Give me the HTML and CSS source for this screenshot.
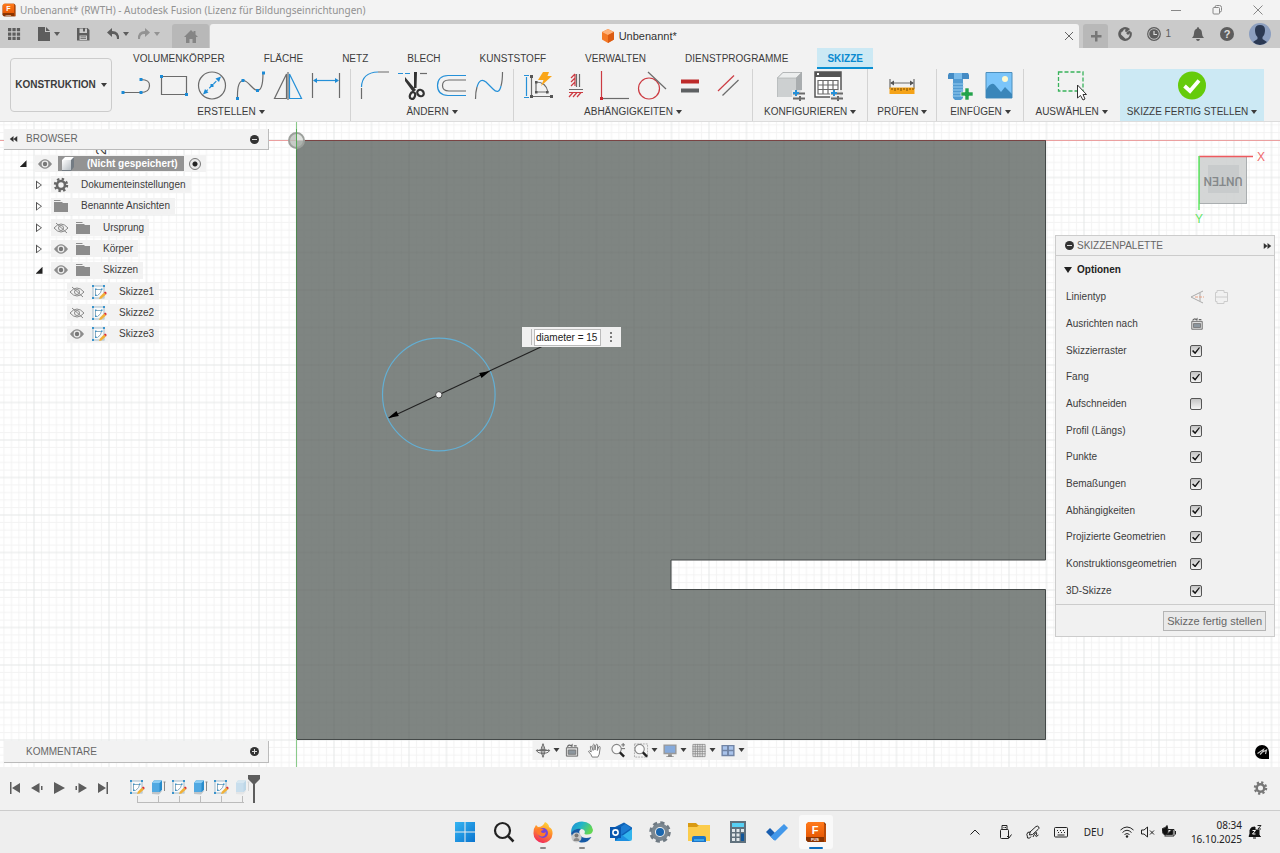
FILE: index.html
```html
<!DOCTYPE html>
<html lang="de">
<head>
<meta charset="utf-8">
<title>Unbenannt* (RWTH) - Autodesk Fusion</title>
<link rel="stylesheet" href="styles.css">
</head>
<body>
<svg class="defs" aria-hidden="true">
  <defs>
    <linearGradient id="orange" x1="0" y1="0" x2="0" y2="1"><stop offset="0" stop-color="#ff7a1c"/><stop offset="1" stop-color="#e85a05"/></linearGradient>
    <linearGradient id="blueTile" x1="0" y1="0" x2="1" y2="1"><stop offset="0" stop-color="#35b5f2"/><stop offset="1" stop-color="#0a74cf"/></linearGradient>
    <linearGradient id="fox" x1="0.7" y1="0" x2="0.3" y2="1"><stop offset="0" stop-color="#ffd93b"/><stop offset=".45" stop-color="#ff8a2a"/><stop offset="1" stop-color="#f0265f"/></linearGradient>
    <linearGradient id="edge" x1="0" y1="0" x2="1" y2="0.4"><stop offset="0" stop-color="#1e88d8"/><stop offset=".5" stop-color="#22b5c8"/><stop offset="1" stop-color="#62d654"/></linearGradient>
    <linearGradient id="metal" x1="0" y1="0" x2="1" y2="1"><stop offset="0" stop-color="#fff"/><stop offset="1" stop-color="#b5bcc2"/></linearGradient>
  </defs>
  <symbol id="fusion" viewBox="0 0 22 22">
    <path d="M4 1H19L21 3V21H3L1 19V4Z" fill="#7c3000"/><path d="M3 1H19V16H1V3Z" fill="url(#orange)"/><path d="M1 16H19V21H3L1 19Z" fill="#8b3400"/>
    <path d="M19 2L21 4V21H19Z" fill="#b94a08"/>
    <text x="10" y="13" class="fusion-f">F</text><text x="10" y="20" class="fusion-s">FUS</text>
  </symbol>
  <symbol id="eye" viewBox="0 0 16 16"><path d="M1 8Q8 -1.500 15 8Q8 17.500 1 8Z" fill="#8c8c8c"/><circle cx="8" cy="8" r="3.400" fill="#eee"/><circle cx="8" cy="8" r="2.200" fill="#777"/></symbol>
  <symbol id="eyeoff" viewBox="0 0 16 16"><g fill="none" stroke="#888"><path d="M1 8Q8 0 15 8Q8 16 1 8Z"/><circle cx="8" cy="8" r="2.500"/><path d="M3 3L14 13"/></g></symbol>
  <symbol id="folder" viewBox="0 0 16 16"><path d="M1 2H7L8 3H1ZM1 4H9L10 5H15V14H1Z" fill="#8c8c8c"/></symbol>
  <symbol id="gear" viewBox="0 0 16 16"><circle cx="8" cy="8" r="4" fill="none" stroke="currentColor" stroke-width="2.600"/><circle cx="8" cy="8" r="6" fill="none" stroke="currentColor" stroke-width="2.400" stroke-dasharray="2.350 2.362"/></symbol>
  <symbol id="sketch" viewBox="0 0 16 16"><rect x="2" y="2" width="11" height="12" fill="#fafafa" stroke="#a3bccb"/><path d="M4.500 5.500H10.500Q10.500 9 6.500 11.500H4.500Z" fill="#fff" stroke="#8aaabd"/><path d="M1 1h2v2H1zM12 1h2v2h-2zM1 13h2v2H1zM4 4.500h1.500V6H4zM10 4.500h1.500V6H10zM4 10.500h1.500V12H4z" fill="#3a94cc"/><path d="M8 15L9 12.500L13 8.500L15 10.500L10.500 14.500Z" fill="#f0b038"/><path d="M13 8.500L14 7.500Q16 8 15.500 9.800L15 10.500Z" fill="#de3030"/></symbol>
  <symbol id="body" viewBox="0 0 16 16"><path d="M2 12V15L9 15.500L12 12Z" fill="#bfc5c9"/><path d="M2 4L4 1.500H12V11L9.500 13H2Z" fill="#288ccb"/><path d="M2 4H9.500V13H2Z" fill="#50a9e2"/><path d="M4 1.500H12L9.500 4H2Z" fill="#8bcdf4"/><path d="M14.500 3V12M13.500 3H15.500" stroke="#888" fill="none"/></symbol>
  <symbol id="camera" viewBox="0 0 16 16"><path d="M2 5H14V14H2Z" fill="#ddd" stroke="#686868"/><path d="M4 7.500H12V12H4Z" fill="#8c969e" stroke="#777"/><path d="M3 4Q5 1 7 3L8 2V4M10 3H13" fill="none" stroke="#666" stroke-width="1.300"/></symbol>
  <symbol id="magnify" viewBox="0 0 16 16"><circle cx="6.500" cy="6.500" r="5" fill="#fafafa" stroke="#888" stroke-width="1.200"/><path d="M10 10L14.500 14.500" stroke="#222" stroke-width="2.500"/></symbol>
</svg>

<header class="titlebar">
  <svg class="title-logo" viewBox="0 0 22 22"><use href="#fusion"/></svg>
  <span class="title-text">Unbenannt* (RWTH) - Autodesk Fusion (Lizenz für Bildungseinrichtungen)</span>
  <div class="window-buttons">
    <button aria-label="Minimieren"><svg viewBox="0 0 10 10"><path d="M0 5.500H10"/></svg></button>
    <button aria-label="Verkleinern"><svg viewBox="0 0 10 10"><path d="M1 3.500Q1 2.500 2 2.500H6.500Q7.500 2.500 7.500 3.500V8Q7.500 9 6.500 9H2Q1 9 1 8ZM3 2Q3 .5 4.500 .5H7.500Q9.500 .5 9.500 2.500V5.500Q9.500 7 8 7"/></svg></button>
    <button aria-label="Schließen"><svg viewBox="0 0 10 10"><path d="M.5 .5L9.500 9.500M9.500 .5L.5 9.500"/></svg></button>
  </div>
</header>

<div class="appbar">
  <div class="quick">
    <button aria-label="Datenbereich"><svg viewBox="0 0 14 14"><path d="M1 1h3.300v3.300H1zM5.400 1h3.300v3.300H5.400zM9.800 1h3.300v3.300H9.800zM1 5.400h3.300v3.300H1zM5.400 5.400h3.300v3.300H5.400zM9.800 5.400h3.300v3.300H9.800zM1 9.800h3.300v3.300H1zM5.400 9.800h3.300v3.300H5.400zM9.800 9.800h3.300v3.300H9.800z"/></svg></button>
    <button class="quick-file" aria-label="Datei"><svg viewBox="0 0 14 14"><path d="M1 0H8V5H13V14H1ZM9 0L13 4H9Z"/></svg><i class="caret"></i></button>
    <button class="quick-save" aria-label="Speichern"><svg viewBox="0 0 14 14"><path fill-rule="evenodd" d="M1 1H11.500L13.500 3V13.500H1ZM3.500 1.500V6H11V1.500H9V4.500H7V1.500ZM3.500 8.500V13H11V8.500ZM4.500 9.500H10V10.300H4.500ZM4.500 11.300H10V12H4.500Z"/></svg></button>
    <button aria-label="Rückgängig"><svg viewBox="0 0 14 14"><path d="M6 1L1 5.500L6 10V7Q11 6.500 11 12H13Q13.500 4 6 4Z"/></svg><i class="caret"></i></button>
    <button class="faded" aria-label="Wiederholen"><svg viewBox="0 0 14 14"><path d="M8 1L13 5.500L8 10V7Q3 6.500 3 12H1Q.5 4 8 4Z"/></svg><i class="caret"></i></button>
  </div>
  <button class="home-tab" aria-label="Startseite"><svg viewBox="0 0 14 14"><path d="M7 0L9.500 2.500V1H11.500V4.500L14 7H12V13H8.500V9H5.500V13H2V7H0Z"/></svg></button>
  <div class="doc-tab">
    <span class="doc-name"><svg viewBox="0 0 14 14"><path d="M7 0L13 3V10.500L7 14L1 10.500V3Z" fill="#f47a27"/><path d="M7 0L13 3L7 6L1 3Z" fill="#ffb27a"/><path d="M13 3V10.500L7 14V6Z" fill="#db5b12"/></svg>Unbenannt*</span>
    <button class="doc-close" aria-label="Tab schließen"><svg viewBox="0 0 10 10"><path d="M1 1L9 9M9 1L1 9"/></svg></button>
  </div>
  <button class="plus-tab" aria-label="Neuer Tab"><svg viewBox="0 0 12 12"><path d="M5 1H7.500V5H11.500V7.500H7.500V11.500H5V7.500H1V5H5Z"/></svg></button>
  <div class="status">
    <button aria-label="Erweiterungen"><svg viewBox="0 0 14 14"><path d="M4 1A6.800 6.800 0 1 0 13.500 5L11.500 5.500Q12.500 11 7.500 11.800L3 7.500Q2.500 4 4 1Z"/><path d="M3 7Q3 4.500 5 4.300Q5 2.500 7.500 2L7 4.500L9 5L12 2Q9.500 0 7 0Q5 0 3 2Z"/><path d="M8 6L10 8L13 5L11.500 3.500Z"/></svg></button>
    <button class="jobs" aria-label="Auftragsstatus"><svg viewBox="0 0 14 14"><circle cx="7" cy="7" r="6.300" fill="none" stroke="currentColor" stroke-width="1.200"/><circle cx="7" cy="7" r="4.800"/><path d="M7 4V7.500H10" fill="none" stroke="#ddd" stroke-width="1.200"/></svg>1</button>
    <button aria-label="Benachrichtigungen"><svg viewBox="0 0 14 14"><path d="M7 0Q8 0 8 1.500Q11 2.500 11 6.500Q11 9 13 11H1Q3 9 3 6.500Q3 2.500 6 1.500Q6 0 7 0ZM5 12H9Q8.500 14 7 14Q5.500 14 5 12Z"/></svg></button>
    <button aria-label="Hilfe"><svg viewBox="0 0 14 14"><circle cx="7" cy="7" r="7"/><text x="7" y="11" class="help-mark">?</text></svg></button>
    <button class="avatar" aria-label="Profil"><svg viewBox="0 0 22 22"><circle cx="11" cy="11" r="11" fill="#8c9fc0"/><path d="M6 7Q6 2 11 2Q16 2 16 7Q16 12 13.500 14V16L18 19Q15 22 11 22Q7 22 4 19L8.500 16V14Q6 12 6 7Z" fill="#2b3953"/></svg></button>
  </div>
</div>

<section class="ribbon">
  <button class="workspace-switch">KONSTRUKTION<i class="caret"></i></button>
  <div class="ribbon-main">
    <nav class="tabs">
      <a href="#">VOLUMENKÖRPER</a><a href="#">FLÄCHE</a><a href="#">NETZ</a><a href="#">BLECH</a><a href="#">KUNSTSTOFF</a><a href="#">VERWALTEN</a><a href="#">DIENSTPROGRAMME</a><a href="#" class="active">SKIZZE</a>
    </nav>
    <div class="groups">
      <div class="group">
        <div class="tools">
          <button aria-label="Linie"><svg viewBox="0 0 30 30"><g class="ln"><path d="M2 21.500H20M20 8.500Q29 8.500 28.500 15Q28 21.500 20 21.500"/></g><path class="dot" d="M.5 20h3v3h-3zM18.500 20h3v3h-3zM18.500 7h3v3h-3z"/></svg></button>
          <button aria-label="Rechteck"><svg viewBox="0 0 30 30"><path class="ln" d="M2.500 5.500H27.500V23.500H2.500Z"/><path class="dot" d="M1 4h3v3H1zM26 22h3v3h-3z"/></svg></button>
          <button aria-label="Kreis"><svg viewBox="0 0 30 30"><circle class="ln" cx="15" cy="14.500" r="13.500"/><path class="bl" d="M8 21.500L22 7.500" stroke-dasharray="4 2"/><path class="dot" d="M13.500 13h3v3h-3zM24 5.500L22 11L18.500 7.500ZM6 23.500L8 18L11.500 21.500Z"/></svg></button>
          <button aria-label="Spline"><svg viewBox="0 0 30 30"><path class="ln" d="M2.500 27Q2 9 9 9.500C13 10 18 19 22 19.500Q28 20 28 2"/><path class="dot" d="M1 26h3v3H1zM6.500 8h3v3h-3zM21 18h3v3h-3zM27 .5h3v3h-3z"/></svg></button>
          <button aria-label="Spiegeln"><svg viewBox="0 0 30 30"><path class="ln" d="M13.500 3V27.500H1.500Z"/><path class="ln" d="M15 1V29"/><path class="bl" d="M16.500 3V27.500H28.500Z"/></svg></button>
          <button aria-label="Bemaßung"><svg viewBox="0 0 30 30"><path class="ln" d="M1.500 2V27M28.500 2V27"/><path class="bl" d="M3 9.500H27"/><path class="dot" d="M2 9.500L6 7V12ZM28 9.500L24 7V12Z"/></svg></button>
        </div>
        <button class="group-label">ERSTELLEN<i class="caret"></i></button>
      </div>
      <div class="group">
        <div class="tools">
          <button aria-label="Abrundung"><svg viewBox="0 0 30 30"><path class="ln" d="M1.500 28V17M18 1H29"/><path class="bl" d="M1.500 16Q2 1.500 18 1"/></svg></button>
          <button aria-label="Stutzen"><svg viewBox="0 0 30 30"><path class="bl" d="M0 2.500H14" stroke-dasharray="5 2"/><path class="ln" d="M22 2.500H29"/><path d="M7 6L18 19L15 21L7 10ZM16 1H19L18.500 17H16Z" fill="#333"/><g fill="none" stroke="#333" stroke-width="2.200"><ellipse cx="14.500" cy="24.500" rx="2.500" ry="3.500" transform="rotate(20 14.500 24.500)"/><ellipse cx="22.500" cy="22" rx="3" ry="3.500" transform="rotate(-45 22.500 22)"/></g></svg></button>
          <button aria-label="Versatz"><svg viewBox="0 0 30 30"><path class="bl" d="M30 4.500H12Q1.500 5 1.500 14.500Q1.500 24 12 24.500H30"/><path class="ln" d="M30 9H13Q6.500 9 6.500 14.500Q6.500 20 13 20H30"/></svg></button>
          <button aria-label="Krümmung"><svg viewBox="0 0 30 30"><path class="ln" d="M1.500 28Q1.500 21 3 16M28.500 1Q28.500 10 27 15"/><path class="bl" d="M3 16Q6 6 12 11L19 18Q25 24 27 15"/></svg></button>
        </div>
        <button class="group-label">ÄNDERN<i class="caret"></i></button>
      </div>
      <div class="group">
        <div class="tools">
          <button aria-label="Automatisch bemaßen"><svg viewBox="0 0 30 30"><path class="bl" d="M3.500 6V25M1 4.500H6M1 26.500H6"/><path class="ln" d="M8.500 5V25.500H29M13 11V21H25Q23 11 13 11"/><path d="M7 4h3v3H7zM7 24h3v3H7zM27 24h3v3h-3zM12 10h2.500v2.500H12zM12 20h2.500v2.500H12zM23 20h2.500v2.500H23z" fill="#555"/><path d="M20 1H26L24.500 5H29L18 15L20.500 9H15Z" fill="#faa61a"/></svg></button>
          <button aria-label="Horizontal/Vertikal"><svg viewBox="0 0 30 30"><path class="ln" d="M15.500 3V16M18.500 3V16M8 18.500H22"/><path class="rd" d="M14 3L10 7M14 7L10 11M14 11L10 15M14 3V15M8 21.500H22M12 21.500L8 26M16 21.500L12 26M20 21.500L16 26"/></svg></button>
          <button aria-label="Koinzident"><svg viewBox="0 0 30 30"><path class="ln" d="M2 27.500H30"/><path class="rd" d="M2.500 0V27"/><path d="M1 26h3v3H1z" fill="#c82a32"/></svg></button>
          <button aria-label="Tangential"><svg viewBox="0 0 30 30"><circle class="rd" cx="12" cy="17.500" r="10.500"/><path class="ln" d="M11 1L29 18"/></svg></button>
          <button aria-label="Gleich"><svg viewBox="0 0 30 30"><path d="M6 8.500H24V12.500H6Z" fill="#bd2a2a"/><path d="M6 17.500H24V21.500H6Z" fill="#5e6163"/></svg></button>
          <button aria-label="Parallel"><svg viewBox="0 0 30 30"><path class="rd" d="M5 20L21 4.500"/><path class="ln" d="M9.500 24.500L25.500 9"/></svg></button>
        </div>
        <button class="group-label">ABHÄNGIGKEITEN<i class="caret"></i></button>
      </div>
      <div class="group wide">
        <div class="tools">
          <button aria-label="Konfiguration"><svg viewBox="0 0 30 30"><path d="M1 7L7 1H26V19L20 26H1Z" fill="#a9adaf"/><path d="M1.500 7H20V26H1.500Z" fill="#cdd0d1"/><path d="M1.500 7L7 1.500H25.500L20 7Z" fill="#eceeee" stroke="#a5a8aa" stroke-width=".6"/><path d="M16 19H30V30H16Z" fill="#f2f2f2" fill-opacity=".7"/><path class="ln heavy" d="M17 22.500H29M17 27.500H29M24 25V30"/><path class="bl heavy" d="M20 19V25M17 22H23"/></svg></button>
          <button aria-label="Tabelle"><svg viewBox="0 0 30 30"><path d="M1 1H27V26H1Z" fill="#fff" stroke="#555" stroke-width="1.500"/><path d="M1 1H27V6H1Z" fill="#555"/><path d="M3 2h2v2H3z" fill="#fff"/><path class="ln" d="M4 9.500H24V23H4ZM4 14H24M4 18.500H24M9 9.500V23M14 9.500V23M19 9.500V23"/><path d="M16 19H30V30H16Z" fill="#f2f2f2" fill-opacity=".9"/><path class="ln heavy" d="M17 22.500H29M17 27.500H29M24 25V30"/><path class="bl heavy" d="M20 19V25M17 22H23"/></svg></button>
        </div>
        <button class="group-label">KONFIGURIEREN<i class="caret"></i></button>
      </div>
      <div class="group">
        <div class="tools"><button aria-label="Messen"><svg viewBox="0 0 30 30"><path class="ln" d="M3 8V18M27 8V18M4 12H26"/><path d="M3 12L7 9.500V14.500ZM27 12L23 9.500V14.500Z" fill="#555"/><path d="M2.500 16.500H27.500V23H2.500Z" fill="#f5a318"/><path d="M5 17v2M8 17v3M11 17v2M14 17v3M17 17v2M20 17v3M23 17v2M26 17v2" stroke="#774c05"/></svg></button></div>
        <button class="group-label">PRÜFEN<i class="caret"></i></button>
      </div>
      <div class="group">
        <div class="tools">
          <button aria-label="Befestigung einfügen"><svg viewBox="0 0 30 30"><path d="M3 2H22L23 4V8H2V4Z" fill="#448bc4"/><path d="M8 2H16V8H8Z" fill="#7abbea"/><path d="M7 8H17V27L15 29H9L7 27Z" fill="#529bd2"/><path d="M6.500 13H17.500M6.500 16H17.500M6.500 19H17.500M6.500 22H17.500M6.500 25H17.500" stroke="#96cdf0" stroke-width="1.200"/><path d="M19 17H23V21H27V25H23V29H19V25H15V21H19Z" fill="#23a34b" stroke="#f2f2f2" stroke-width=".6"/></svg></button>
          <button aria-label="Bild einfügen"><svg viewBox="0 0 30 30"><path d="M2 1.500H28V27H2Z" fill="#7bc5fa" stroke="#4d8fbd"/><circle cx="21" cy="8" r="3" fill="#fff9cf"/><path d="M2 19Q7 10 11 14L17 21L21 16L28 23V27H2Z" fill="#3a86ba"/></svg></button>
        </div>
        <button class="group-label">EINFÜGEN<i class="caret"></i></button>
      </div>
      <div class="group wide last">
        <div class="tools"><button aria-label="Auswahl"><svg viewBox="0 0 30 30"><path d="M1.500 1H26V20H1.500Z" fill="none" stroke="#39b35b" stroke-width="1.300" stroke-dasharray="4 2"/><path d="M20.500 14V27L23.500 24.500L26 29L28 28L26 23.500H29.500Z" fill="#fff" stroke="#333"/></svg></button></div>
        <button class="group-label">AUSWÄHLEN<i class="caret"></i></button>
      </div>
      <div class="group finish">
        <div class="tools"><button aria-label="Fertig stellen"><svg viewBox="0 0 30 30"><circle cx="15" cy="14.500" r="14" fill="#65cb0b"/><path d="M7.500 15L13 20L22 9.500" fill="none" stroke="#fff" stroke-width="3.800"/></svg></button></div>
        <button class="group-label">SKIZZE FERTIG STELLEN<i class="caret"></i></button>
      </div>
    </div>
  </div>
</section>

<main class="viewport">
  <svg class="canvas" role="img" aria-label="Skizze mit Kreis">
    <defs>
      <pattern id="grid" patternUnits="userSpaceOnUse" x="296.500" y="140" width="37.500" height="37.500">
        <path d="M7.500 0V37.500M15 0V37.500M22.500 0V37.500M30 0V37.500M0 7.500H37.500M0 15H37.500M0 22.500H37.500M0 30H37.500" stroke="#f3f3f3" fill="none"/>
        <path d="M0 0V37.500M0 0H37.500M37.500 0V37.500M0 37.500H37.500" stroke="#e5e8e7" fill="none"/>
      </pattern>
      <pattern id="gridBody" patternUnits="userSpaceOnUse" x="296.500" y="140" width="37.500" height="37.500">
        <path d="M7.500 0V37.500M15 0V37.500M22.500 0V37.500M30 0V37.500M0 7.500H37.500M0 15H37.500M0 22.500H37.500M0 30H37.500" stroke="#000" stroke-opacity=".01" fill="none"/>
        <path d="M0 0V37.500M0 0H37.500M37.500 0V37.500M0 37.500H37.500" stroke="#000" stroke-opacity=".04" fill="none"/>
      </pattern>
    </defs>
    <g transform="translate(0 -122)">
      <rect x="0" y="122" width="100%" height="100%" fill="#fff"/>
      <rect x="0" y="122" width="100%" height="100%" fill="url(#grid)"/>
      <text class="ruler" transform="translate(106 155) rotate(-90)">2</text>
      <path d="M0 140.500H5000" stroke="#eba0a0"/>
      <path d="M296.500 140.500H1045.500V560H671V589.500H1045.500V739.500H296.500Z" fill="#7f8582"/>
      <path d="M296.500 140.500H1045.500V560H671V589.500H1045.500V739.500H296.500Z" fill="url(#gridBody)" stroke="#444948"/>
      <path d="M296.500 140.500H1045.500" stroke="#7a4444"/>
      <path d="M296.500 122V5000" stroke="#8acb8a"/>
      <path d="M296.500 140V739" stroke="#4f8a50"/>
      <circle cx="296.500" cy="140.500" r="7.500" fill="#b9beb9" fill-opacity=".8" stroke="#9ca09c" stroke-width="2"/>
      <path d="M296.500 134A6.500 6.500 0 0 1 303 140.500H296.500Z" fill="#dfe2df"/>
      <path d="M296.500 129V150" stroke="#58a858"/>
      <circle cx="438.800" cy="394.500" r="56.300" fill="none" stroke="#63afd4" stroke-width="1.200"/>
      <path d="M389 418L543 346" stroke="#222" stroke-width="1.200"/>
      <path d="M388 418L396.500 411L398.800 416ZM490 371L481.500 378L479.200 373Z" fill="#000"/>
      <circle cx="438.800" cy="394.800" r="3.200" fill="#f4f4f4" stroke="#444"/>
    </g>
  </svg>

  <div class="dimension">
    <i class="grip"></i><input type="text" value="diameter = 15" aria-label="Durchmesser"><button aria-label="Mehr"><i></i><i></i><i></i></button>
  </div>

  <svg class="viewcube" viewBox="0 0 76 82" aria-label="Ansicht unten">
    <rect x="8.500" y="8.500" width="47" height="47" fill="#cfd1d2" fill-opacity=".9" stroke="#aaaeb0"/>
    <rect x="17" y="17" width="31" height="28" fill="#c8cbcc"/>
    <text transform="translate(32 29) rotate(180)" class="cube-face">UNTEN</text>
    <path d="M8 8.500H62" stroke="#ee5a5f" stroke-width="1.500"/><path d="M8 8V62" stroke="#5fe862" stroke-width="1.500"/>
    <text x="66" y="13" class="axis-x">X</text><text x="4" y="75" class="axis-y">Y</text>
  </svg>

  <aside class="browser">
    <header class="panel-head"><svg class="collapse" viewBox="0 0 10 8"><path d="M5 0V8L0 4ZM10 0V8L5 4Z"/></svg><span>BROWSER</span><button aria-label="Einklappen" class="round minus"></button></header>
    <ul class="tree">
      <li><i class="arrow open"></i><span class="node root"><svg><use href="#eye"/></svg><b><svg viewBox="0 0 16 16"><path d="M2 4L5 1H14V11L11 15H2Z" fill="#737b83"/><path d="M2 4H11V14H2Z" fill="url(#metal)"/><path d="M2 4L5 1H14L11 4Z" fill="#fff"/></svg>(Nicht gespeichert)</b><input type="radio" checked aria-label="Aktive Komponente"></span></li>
      <li class="l1"><i class="arrow"></i><span class="node"><svg class="dark"><use href="#gear"/></svg><span>Dokumenteinstellungen</span></span></li>
      <li class="l1"><i class="arrow"></i><span class="node"><svg><use href="#folder"/></svg><span>Benannte Ansichten</span></span></li>
      <li class="l1"><i class="arrow"></i><span class="node"><svg><use href="#eyeoff"/></svg><svg><use href="#folder"/></svg><span>Ursprung</span></span></li>
      <li class="l1"><i class="arrow"></i><span class="node"><svg><use href="#eye"/></svg><svg><use href="#folder"/></svg><span>Körper</span></span></li>
      <li class="l1"><i class="arrow open"></i><span class="node"><svg><use href="#eye"/></svg><svg><use href="#folder"/></svg><span>Skizzen</span></span></li>
      <li class="l2"><i class="arrow none"></i><span class="node"><svg><use href="#eyeoff"/></svg><svg><use href="#sketch"/></svg><span>Skizze1</span></span></li>
      <li class="l2"><i class="arrow none"></i><span class="node"><svg><use href="#eyeoff"/></svg><svg><use href="#sketch"/></svg><span>Skizze2</span></span></li>
      <li class="l2"><i class="arrow none"></i><span class="node"><svg><use href="#eye"/></svg><svg><use href="#sketch"/></svg><span>Skizze3</span></span></li>
    </ul>
  </aside>

  <section class="palette">
    <header class="palette-head"><button aria-label="Einklappen" class="round minus"></button><span>SKIZZENPALETTE</span><svg class="collapse" viewBox="0 0 10 8"><path d="M0 0V8L5 4ZM5 0V8L10 4Z"/></svg></header>
    <button class="palette-section"><i class="caret"></i>Optionen</button>
    <div class="options">
      <div class="option"><span>Linientyp</span><button aria-label="Konstruktion"><svg viewBox="0 0 14 14"><path d="M13 1L1 7L13 13M10 3V11" fill="none" stroke="#aaa"/><path d="M5 7H14" stroke="#e8a184" stroke-dasharray="3 1"/></svg></button><button class="second" aria-label="Mittellinie"><svg viewBox="0 0 14 14"><path d="M3 .5H10V2.500H13.500V11.500H10V13.500H3V11.500H1.500V2.500H3ZM1.500 7H13" fill="none" stroke="#ccc"/></svg></button></div>
      <div class="option"><span>Ausrichten nach</span><button aria-label="Ausrichten nach"><svg viewBox="0 0 16 16"><use href="#camera"/></svg></button></div>
      <label class="option"><span>Skizzierraster</span><input type="checkbox" checked></label>
      <label class="option"><span>Fang</span><input type="checkbox" checked></label>
      <label class="option"><span>Aufschneiden</span><input type="checkbox"></label>
      <label class="option"><span>Profil (Längs)</span><input type="checkbox" checked></label>
      <label class="option"><span>Punkte</span><input type="checkbox" checked></label>
      <label class="option"><span>Bemaßungen</span><input type="checkbox" checked></label>
      <label class="option"><span>Abhängigkeiten</span><input type="checkbox" checked></label>
      <label class="option"><span>Projizierte Geometrien</span><input type="checkbox" checked></label>
      <label class="option"><span>Konstruktionsgeometrien</span><input type="checkbox" checked></label>
      <label class="option"><span>3D-Skizze</span><input type="checkbox" checked></label>
    </div>
    <footer class="palette-foot"><button>Skizze fertig stellen</button></footer>
  </section>

  <section class="comments panel-head"><span>KOMMENTARE</span><button aria-label="Ausklappen" class="round plus"></button></section>

  <div class="navbar">
    <button class="drop" aria-label="Orbit"><svg viewBox="0 0 16 16"><g fill="none" stroke="#666"><path d="M8 1V15M1 8H15"/><ellipse cx="8" cy="8" rx="2" ry="5.500"/><ellipse cx="8" cy="9" rx="6" ry="2"/></g><path d="M8 0L9.500 2.500H6.500ZM8 16L9.500 13.500H6.500ZM0 8L2.500 6.500V9.500ZM16 8L13.500 6.500V9.500Z" fill="#777"/></svg><i class="caret"></i></button>
    <button aria-label="Ausrichten"><svg viewBox="0 0 16 16"><use href="#camera"/></svg></button>
    <button aria-label="Schwenken"><svg viewBox="0 0 16 16"><path d="M5 15Q4 12 1 9Q1.500 7.500 4 9.500L3 4Q3.500 2.500 4.500 4L6 8L5.800 2Q6.500 .5 7.500 2L8 7.500L9 2Q10 .5 10.800 2L10.500 8L12 4Q13.500 3 13.500 5L12.500 12L11 15Z" fill="#fff" stroke="#777"/></svg></button>
    <button aria-label="Zoom"><svg viewBox="0 0 16 16"><use href="#magnify"/><path d="M13.500 0V4M11.500 2H15.500M11.500 6H15.500" stroke="#666"/></svg></button>
    <button class="drop" aria-label="Einpassen"><svg viewBox="0 0 16 16"><path d="M1 1H15V15H1Z" fill="none" stroke="#aaa" stroke-dasharray="2 1"/><use href="#magnify"/></svg><i class="caret"></i></button>
    <button class="drop" aria-label="Anzeige"><svg viewBox="0 0 16 16"><path d="M1 1.500H15V12H1Z" fill="#999"/><path d="M2.500 3H13.500V10.500H2.500Z" fill="#86aadb"/><path d="M6 12H10V14H12V15H4V14H6Z" fill="#888"/></svg><i class="caret"></i></button>
    <button class="drop" aria-label="Raster"><svg viewBox="0 0 16 16"><path d="M1.500 1.500H14.500V14.500H1.500ZM4 1V15M6.500 1V15M9 1V15M11.500 1V15M1 4H15M1 6.500H15M1 9H15M1 11.500H15" fill="#e4e4e4" stroke="#888" stroke-width=".8"/></svg><i class="caret"></i></button>
    <button class="drop" aria-label="Ansichtsfenster"><svg viewBox="0 0 16 16"><path d="M1 2H15V14H1Z" fill="#7184a5"/><path d="M2.500 3.500H7V7.300H2.500ZM9 3.500H13.500V7.300H9ZM2.500 8.700H7V12.500H2.500ZM9 8.700H13.500V12.500H9Z" fill="#a9c3eb"/></svg><i class="caret"></i></button>
  </div>
  <button class="assistant" aria-label="Assistent"><svg viewBox="0 0 14 14"><path d="M7 0A7 7 0 0 0 0 7A7 7 0 0 0 7 14H14V7A7 7 0 0 0 7 0Z"/><path d="M2.500 8.500L8.500 4.500L7.500 7L11.500 5L10.500 9M5 9.500L7 7.500" fill="none" stroke="#ccc" stroke-width="1.100"/></svg></button>
</main>

<section class="timeline">
  <div class="play">
    <button aria-label="Anfang"><svg viewBox="0 0 12 12"><path d="M1 0H2.500V12H1ZM11 1V11L3 6Z"/></svg></button>
    <button aria-label="Zurück"><svg viewBox="0 0 12 12"><path d="M8.500 1V11L0 6ZM10 4H11.500V8H10Z"/></svg></button>
    <button aria-label="Abspielen"><svg viewBox="0 0 12 12"><path d="M1 0V12L12 6Z"/></svg></button>
    <button aria-label="Vor"><svg viewBox="0 0 12 12"><path d="M3.500 1V11L12 6ZM.5 4H2V8H.5Z"/></svg></button>
    <button aria-label="Ende"><svg viewBox="0 0 12 12"><path d="M9.500 0H11V12H9.500ZM1 1V11L9 6Z"/></svg></button>
  </div>
  <div class="features">
    <button aria-label="Skizze1"><svg><use href="#sketch"/></svg></button>
    <button aria-label="Extrusion1"><svg><use href="#body"/></svg></button>
    <button aria-label="Skizze2"><svg><use href="#sketch"/></svg></button>
    <button aria-label="Extrusion2"><svg><use href="#body"/></svg></button>
    <button aria-label="Skizze3"><svg><use href="#sketch"/></svg></button>
    <button class="ghost" aria-label="Extrusion3"><svg><use href="#body"/></svg></button>
  </div>
  <svg class="marker" viewBox="0 0 12 28"><path d="M0 0H12V4L7 9V28H5V9L0 4Z"/></svg>
  <button class="settings" aria-label="Einstellungen"><svg><use href="#gear"/></svg></button>
</section>

<footer class="taskbar">
  <div class="apps">
    <button aria-label="Start"><svg viewBox="0 0 22 22"><path d="M1 1H10.500V10.500H1ZM11.500 1H21V10.500H11.500ZM1 11.500H10.500V21H1ZM11.500 11.500H21V21H11.500Z" fill="url(#blueTile)"/></svg></button>
    <button aria-label="Suchen"><svg viewBox="0 0 22 22"><circle cx="9.500" cy="9.500" r="7.500" fill="none" stroke="#222" stroke-width="2.200"/><path d="M15 15L20.500 20.500" stroke="#222" stroke-width="2.500"/></svg></button>
    <button class="running" aria-label="Firefox"><svg viewBox="0 0 22 22"><path d="M13 1Q17 3 17 6Q21 8 20.500 13A9.500 9.500 0 0 1 1.500 12Q1.500 7 4 4L6 6Q11 6 13 1Z" fill="url(#fox)"/><circle cx="11" cy="12" r="5" fill="#7546d8"/><path d="M5 8Q9 6 12 9Q9 9 9 11Q11 13 14 11Q13 17 8 15Q4 13 5 8Z" fill="#ff7a2b"/></svg></button>
    <button class="running" aria-label="Edge"><svg viewBox="0 0 22 22"><path d="M0 12Q0 1 11 .5Q21 1 22 9Q21.500 14 15 13.500Q12.500 13 14 11Q13.500 8 10 8Q4 7.500 0 12Z" fill="url(#edge)"/><path d="M0 12Q4 7 10 8Q7 10 9 14Q12 18.500 20.500 16Q17 22 10 21.500Q1 20.500 0 12Z" fill="#1559a5"/><circle cx="5.500" cy="16.500" r="5" fill="#c9c9c9"/><circle cx="5.500" cy="14.500" r="2" fill="#777"/><path d="M2.500 20Q2.500 17 5.500 17Q8.500 17 8.500 20Z" fill="#888"/></svg></button>
    <button aria-label="Outlook"><svg viewBox="0 0 22 22"><path d="M5 6L14 1.500L22 6.500V17L18 20H5Z" fill="#0d62b7"/><path d="M8 8L15 3L21 7L11 14Z" fill="#1c7cd2"/><path d="M5 20L22 8V18Q22 20 20 20Z" fill="#33b5ed"/><path d="M5 20L12 14L20 20Z" fill="#1d8fe0"/><path d="M0 6H11V17H0Z" fill="#0a57ae"/><circle cx="5.500" cy="11.500" r="2.600" fill="none" stroke="#fff" stroke-width="1.600"/></svg></button>
    <button class="gearapp" aria-label="Einstellungen"><svg viewBox="0 0 22 22"><circle cx="11" cy="11" r="7" fill="#eee" stroke="#7b8790" stroke-width="4"/><circle cx="11" cy="11" r="9.500" fill="none" stroke="#707b84" stroke-width="2.600" stroke-dasharray="4.200 3.261"/><circle cx="11" cy="11" r="4" fill="#1b67ae"/></svg></button>
    <button aria-label="Explorer"><svg viewBox="0 0 22 22"><path d="M0 2H8L10 4H21V10H0Z" fill="#d99a12"/><path d="M0 6H9L11 4H22V20H0Z" fill="#fbcc4c"/><path d="M4 21V17Q4 15 6 15H16Q18 15 18 17V21Z" fill="#1b75c9"/><path d="M6 18H16V20H6Z" fill="#3ba6ec"/></svg></button>
    <button aria-label="Rechner"><svg viewBox="0 0 22 22"><path d="M3 0H19V22H3Z" fill="#60717d"/><path d="M5 2H17V6H5Z" fill="#57d0f4"/><path d="M5 8h3v3H5zM9.500 8h3v3h-3zM14 8h3v3h-3zM5 12.500h3v3H5zM9.500 12.500h3v3h-3zM5 17h3v3H5zM9.500 17h3v3h-3z" fill="#e0e7ea"/><path d="M14 12.500h3V20h-3z" fill="#11569a"/></svg></button>
    <button aria-label="To Do"><svg viewBox="0 0 22 22"><path d="M0 11L4 7L12 15L8 19Z" fill="#195eaf"/><path d="M8 19L4.500 15.500L18 3L22 7L10 19Q9 20 8 19Z" fill="#4398ea"/></svg></button>
    <button class="active" aria-label="Fusion"><svg viewBox="0 0 22 22"><use href="#fusion"/></svg></button>
  </div>
  <div class="tray">
    <button class="more" aria-label="Ausgeblendete Symbole"><svg viewBox="0 0 14 14"><path d="M2.500 9.500L7 5L11.500 9.500"/></svg></button>
    <button aria-label="USB"><svg viewBox="0 0 14 14"><path d="M4 5V.5H9V5M2.500 5.500Q2.500 4.500 3.500 4.500H9.500Q10.500 4.500 10.500 5.500V13.500H3.500Q2.500 13.500 2.500 12.500ZM9 11L11 13L13.500 9.500M6 2V3M7.500 2V3"/></svg></button>
    <button aria-label="Stift"><svg viewBox="0 0 14 14"><path d="M3.500 10L4 7L10 1.500Q12 .5 12.800 2Q13.500 3.500 12 4.500L6.500 9.500ZM4.500 7Q1 6.500 .8 9.500Q1.500 11 1.500 13Q4 14 5 11.500M7 12Q9 7 10.500 7.500Q11.500 9 9.500 11Q9.500 12.500 12.500 10"/></svg></button>
    <button aria-label="Tastatur"><svg viewBox="0 0 14 14"><path d="M.5 3.500Q.5 2.500 1.500 2.500H12.500Q13.500 2.500 13.500 3.500V11Q13.500 12 12.500 12H1.500Q.5 12 .5 11ZM3 5.500H4M6 5.500H7M9 5.500H10M4 7.500H5M7 7.500H8M10 7.500H11M3.500 10H10.500"/></svg></button>
    <button class="lang">DEU</button>
    <button class="sys" aria-label="Netzwerk und Ton">
      <svg viewBox="0 0 14 14"><path d="M.5 5Q7 -1 13.500 5M2.500 7.500Q7 3 11.500 7.500M4.500 9.500Q7 7.500 9.500 9.500"/><circle cx="7" cy="11.500" r="1.200" fill="#222" stroke="none"/></svg>
      <svg viewBox="0 0 14 14"><path d="M.5 5H3L6.500 2V12L3 9H.5ZM9 5.500L13 9.500M13 5.500L9 9.500"/></svg>
      <svg viewBox="0 0 14 14"><path d="M6 4.500H12V11H2.500M13.500 6V9.500"/><path d="M5 .5Q4 3 .5 3.500Q0 10 3.500 10L5 9Q7 7 5 .5ZM9.500 5L5 9.500H10.500V5Z" fill="#111"/></svg>
    </button>
    <button class="clock"><time>08:34</time><time>16.10.2025</time></button>
    <button class="bell" aria-label="Nicht stören"><svg viewBox="0 0 14 14"><path d="M2 5Q3 1.500 7 2V5H11V10L12.500 11.500H1L2 9ZM5 13H8" fill="#111" stroke="#111"/><path d="M9.500 .5H13L10 4H13"/><path d="M4.500 5.500H7.500L4.500 9H7.500" stroke="#fff"/></svg></button>
  </div>
</footer>
</body>
</html>
```
FILE: styles.css
```css
* { box-sizing: border-box; }
body {
  margin: 0;
  min-height: 100vh;
  display: grid;
  grid-template-rows: auto auto auto 1fr auto auto;
  grid-template-columns: minmax(0, 1fr);
  font: 10px/14px "Liberation Sans", Arial, sans-serif;
  color: #3c3c3c;
  background: #f0f0f0;
  overflow-x: hidden;
}
button { padding: 0; border: 0; background: none; font: inherit; color: inherit; display: flex; align-items: center; justify-content: center; }
svg { display: block; flex: none; }
a { color: inherit; text-decoration: none; }
.defs { position: absolute; width: 0; height: 0; }
.caret { flex: none; border: 3px solid transparent; border-top: 4px solid currentColor; border-bottom: 0; margin-left: 3px; }
.fusion-f { font: bold 11px "Liberation Sans", sans-serif; fill: #fff; text-anchor: middle; }
.fusion-s { font: bold 4px "Liberation Sans", sans-serif; fill: #fff; text-anchor: middle; }

.titlebar { height: 20px; display: flex; align-items: center; gap: 4px; padding: 0 17px 0 2px; background: #f3f3f3; font-family: "Noto Sans", "Open Sans", sans-serif; color: #919191; }
.title-logo { width: 14px; height: 14px; }
.title-text { flex: 1; white-space: nowrap; }
.window-buttons { display: flex; gap: 31px; }
.window-buttons svg { width: 10px; height: 10px; fill: none; stroke: #888; }

.appbar { height: 28px; display: flex; align-items: stretch; background: #cacaca; color: #5d5d5d; }
.appbar svg { width: 14px; height: 14px; fill: currentColor; }
.quick { width: 172px; display: flex; align-items: center; gap: 8px; padding-left: 7px; }
.quick-file { margin-left: 8px; }
.quick .quick-save { margin: 0 8px; }
.faded { opacity: .5; }
.home-tab { width: 37px; margin-top: 4px; padding-top: 1px; background: #b8b8b8; color: #858585; border-radius: 3px 3px 0 0; }
.doc-tab { flex: 1; margin: 4px 4px 0 1px; padding-left: 8px; display: flex; align-items: center; background: #f2f2f2; border-radius: 3px 3px 0 0; }
.doc-name { flex: 1; display: flex; align-items: center; justify-content: center; gap: 4px; color: #333; font-size: 11px; }
.doc-close { width: 20px; height: 20px; }
.appbar .doc-close svg { width: 10px; height: 10px; fill: none; stroke: #666; }
.plus-tab { width: 25px; margin-top: 4px; background: #b8b8b8; border-radius: 3px 3px 0 0; color: #777; }
.plus-tab svg { width: 12px; height: 12px; }
.status { display: flex; align-items: center; gap: 15px; padding: 0 9px 0 10px; }
.jobs { gap: 4px; margin-right: 5px; }
.help-mark { font: bold 11px "Liberation Sans", sans-serif; fill: #ddd; text-anchor: middle; }
.appbar .avatar svg { width: 22px; height: 22px; }

.ribbon { display: flex; height: 74px; background: #f2f2f2; border-bottom: 1px solid #dcdcdc; }
.workspace-switch { width: 102px; height: 54px; margin: 10px 0 0 10px; border: 1px solid #ccc; border-radius: 4px; font-weight: bold; }
.workspace-switch .caret { margin-left: 5px; }
.ribbon-main { flex: 1; display: flex; flex-direction: column; }
.tabs { height: 21px; display: flex; gap: 19px; padding-left: 11px; }
.tabs a { padding: 4px 10px 0; white-space: nowrap; border-bottom: 2px solid transparent; }
.tabs .active { color: #0a8ad0; font-weight: bold; background: #cce9f4; border-color: #0a8fd2; }
.groups { flex: 1; display: flex; }
.group { display: flex; flex-direction: column; align-items: center; padding: 2px 9px 0; border-right: 1px solid #d3d3d3; }
.group.wide { padding: 2px 11px 0; }
.group.last { border: 0; }
.tools { display: flex; gap: 8px; }
.tools svg { width: 30px; height: 30px; }
.group-label { height: 20px; padding-top: 1px; white-space: nowrap; }
.group.finish { border: 0; background: #cce9f4; padding: 2px 7px 0; margin-left: 1px; }
.ln, .bl, .rd { fill: none; stroke: #6b6b6b; stroke-width: 1.2; }
.bl { stroke: #2590d8; }
.rd { stroke: #cc3b42; }
.heavy { stroke-width: 2; }
.dot { fill: #1c8bd6; }

.viewport { position: relative; min-height: 645px; overflow: hidden; }
.canvas { position: absolute; inset: 0; width: 100%; height: 100%; }
.ruler { font: 14px "Liberation Sans", sans-serif; fill: #444; }
.dimension { position: absolute; left: 522px; top: 205px; width: 99px; height: 20px; display: flex; align-items: center; background: #f0f0f0; }
.grip { width: 10px; height: 16px; border-right: 1px solid #bbb; }
.dimension input { width: 67px; height: 17px; margin-left: 2px; padding: 0 1px; border: 1px solid #bbb; font: inherit; color: #222; background: #fff; }
.dimension button { flex: 1; flex-direction: column; gap: 2px; }
.dimension button i { width: 2px; height: 2px; border-radius: 50%; background: #555; }
.viewcube { position: absolute; right: 13px; top: 26px; width: 76px; height: 82px; }
.cube-face { font: 500 12px Roboto, "Liberation Sans", sans-serif; fill: #84888a; text-anchor: middle; }
.axis-x, .axis-y { font: 12px "Liberation Sans", sans-serif; fill: #ef6a6e; }
.axis-y { fill: #62e565; }

.browser { position: absolute; left: 4px; top: 7px; width: 265px; }
.panel-head { height: 21px; display: flex; align-items: center; padding: 0 9px 0 5px; background: #f2f2f2; border-right: 1px solid #bbb; border-bottom: 1px solid #bbb; color: #666; }
.panel-head span { flex: 1; padding-left: 8px; }
.collapse { width: 9px; height: 6px; fill: #333; }
.round { position: relative; width: 9px; height: 9px; border-radius: 50%; background: #333; }
.round::before, .plus::after { content: ""; position: absolute; left: 2px; top: 4px; width: 5px; height: 1px; background: #ddd; }
.plus::after { transform: rotate(90deg); }
.tree { list-style: none; margin: 3px 0 0; padding: 0 0 0 11px; height: 192px; display: grid; grid-auto-rows: 1fr; }
.tree li { display: flex; align-items: center; gap: 4px; }
.tree .l1, .tree .l2 { padding-left: 16px; }
.l2 .node { margin-left: 16px; }
.arrow { width: 16px; display: flex; justify-content: center; }
.arrow::before { content: ""; width: 6px; height: 9px; background: #555; clip-path: polygon(0 0, 100% 50%, 0 100%, 0 12%, 1px 18%, 1px 82%, 80% 50%, 0 14%); }
.arrow.open::before { width: 7px; height: 7px; background: #222; clip-path: polygon(100% 0, 100% 100%, 0 100%); }
.arrow.none::before { content: none; }
.node { height: 17px; display: flex; align-items: center; gap: 6px; padding: 0 5px 0 2px; background: #f2f2f2; }
.node svg { width: 16px; height: 16px; }
.node > span { padding-left: 6px; }
.dark { color: #666; }
.root { gap: 5px; }
.root b { height: 15px; display: flex; align-items: center; gap: 11px; padding: 0 6px 0 2px; background: #939393; color: #fff; }
.root input { appearance: none; width: 12px; height: 12px; margin: 0; border: 1px solid #777; border-radius: 50%; background: radial-gradient(#222 0 2px, #e8e8e8 3px); }

.palette { position: absolute; right: 5px; top: 113px; width: 220px; background: #f1f1f1; border: 1px solid #ccc; }
.palette-head { height: 20px; display: flex; align-items: center; gap: 3px; padding: 0 2px 0 9px; border-bottom: 1px solid #ccc; color: #666; }
.palette-head span { flex: 1; }
.palette-section { height: 28px; padding-left: 8px; gap: 5px; font-weight: bold; color: #222; }
.palette-section .caret { margin: 0; border-width: 6px 4px 0; }
.options { display: grid; grid-auto-rows: 1fr; height: 320px; padding-left: 10px; }
.option { display: flex; align-items: center; }
.option span { width: 124px; white-space: nowrap; }
.option svg { width: 14px; height: 14px; }
.option .second { margin-left: 10px; }
.option input { appearance: none; width: 12px; height: 12px; margin: 0; border: 1px solid #555; border-radius: 2px; background: linear-gradient(#c4c4c4, #f4f4f4); display: grid; place-items: center; }
.option input:checked::after { content: ""; width: 8px; height: 7px; background: #111; clip-path: polygon(0 55%, 15% 42%, 38% 68%, 88% 0, 100% 8%, 40% 100%); }
.palette-foot { border-top: 1px solid #ccc; height: 32px; display: flex; justify-content: flex-end; align-items: center; padding-right: 8px; }
.palette-foot button { height: 20px; padding: 0 3px; border: 1px solid #b5b5b5; background: #e9e9e9; font-size: 11px; color: #666; white-space: nowrap; }

.comments { position: absolute; left: 4px; bottom: 4px; width: 265px; height: 22px; padding-left: 14px; }
.navbar { position: absolute; left: 50%; bottom: 7px; transform: translateX(-50%); height: 20px; display: flex; align-items: center; gap: 8px; padding: 0 3px; background: #f2f2f2; }
.navbar svg { width: 15px; height: 15px; }
.navbar .drop { margin-right: -3px; }
.navbar .drop:last-child { margin-right: 0; }
.assistant { position: absolute; right: 11px; bottom: 8px; }
.assistant svg { width: 14px; height: 14px; }

.timeline { height: 44px; display: flex; align-items: flex-start; padding: 8px 12px 0 8px; background: #f1f1f1; border-bottom: 1px solid #ccc; color: #5d5d5d; }
.timeline svg { fill: currentColor; }
.play { display: flex; gap: 10px; margin-top: 7px; padding-left: 1px; }
.play svg { width: 12px; height: 12px; }
.features { display: flex; gap: 5px; margin: 4px 0 0 20px; }
.features svg { width: 16px; height: 16px; }
.features button { position: relative; height: 24px; align-items: flex-start; }
.features button::after { content: ""; position: absolute; left: 8px; right: -14px; bottom: 0; height: 6px; border: 1px solid #bbb; border-width: 0 0 1px 1px; }
.features button:last-child::after { right: auto; width: 1px; }
.ghost svg { opacity: .25; }
.timeline .marker { width: 12px; height: 28px; margin-left: -2px; }
.settings { margin: 5px 0 0 auto; color: #777; }
.settings svg { width: 15px; height: 16px; }

.taskbar { height: 42px; display: grid; grid-template-columns: 1fr auto 1fr; align-items: center; background: #eee; font-family: "Noto Sans", "Open Sans", sans-serif; color: #222; }
.apps { grid-column: 2; display: flex; gap: 5px; }
.apps button { position: relative; width: 34px; height: 34px; border-radius: 3px; }
.apps svg { width: 22px; height: 22px; }
.apps .active { background: #f9f9f9; }
.apps .running::after, .apps .active::after { content: ""; position: absolute; bottom: 0; width: 6px; height: 2px; border-radius: 1px; background: #888; }
.apps .active::after { width: 14px; background: #0a6dbf; }
.tray { display: flex; align-items: center; justify-content: flex-end; gap: 14px; padding-right: 18px; }
.tray svg { width: 14px; height: 14px; fill: none; stroke: #222; }
.tray .more { margin-right: 2px; }
.lang { margin-left: 2px; }
.sys { gap: 7px; margin: 0 1px 0 2px; }
.tray .clock { flex-direction: column; align-items: flex-end; }
.bell { margin-left: -8px; }
```
